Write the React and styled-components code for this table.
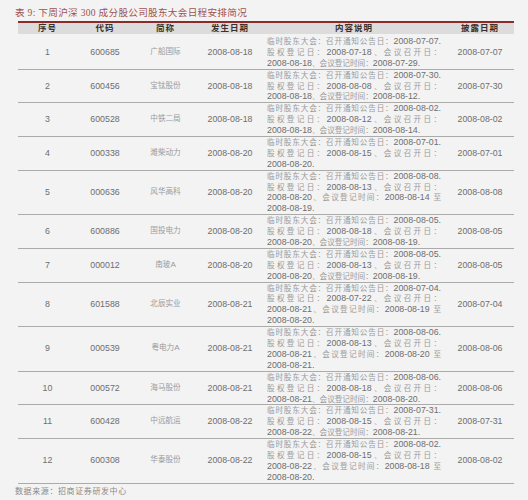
import React from "react";
import styled, { createGlobalStyle } from "styled-components";

const GlobalStyle = createGlobalStyle`
  html, body {
    margin: 0;
    padding: 0;
    background: #f3f3f3;
  }
  body {
    font-family: "Liberation Sans", "Noto Sans CJK SC", sans-serif;
    -webkit-font-smoothing: antialiased;
  }
`;

const rows = [
  {
    no: 1, code: "600685", name: "广船国际", date: "2008-08-18", pub: "2008-07-07",
    lines: ["临时股东大会：召开通知公告日：2008-07-07.", "股权登记日：2008-07-18、会议召开日：", "2008-08-18、会议登记时间：2008-07-29."],
  },
  {
    no: 2, code: "600456", name: "宝钛股份", date: "2008-08-18", pub: "2008-07-30",
    lines: ["临时股东大会：召开通知公告日：2008-07-30.", "股权登记日：2008-08-08、会议召开日：", "2008-08-18、会议登记时间：2008-08-12."],
  },
  {
    no: 3, code: "600528", name: "中铁二局", date: "2008-08-18", pub: "2008-08-02",
    lines: ["临时股东大会：召开通知公告日：2008-08-02.", "股权登记日：2008-08-12、会议召开日：", "2008-08-18、会议登记时间：2008-08-14."],
  },
  {
    no: 4, code: "000338", name: "潍柴动力", date: "2008-08-20", pub: "2008-07-01",
    lines: ["临时股东大会：召开通知公告日：2008-07-01.", "股权登记日：2008-08-15、会议召开日：", "2008-08-20."],
  },
  {
    no: 5, code: "000636", name: "风华高科", date: "2008-08-20", pub: "2008-08-08",
    lines: ["临时股东大会：召开通知公告日：2008-08-08.", "股权登记日：2008-08-13、会议召开日：", "2008-08-20、会议登记时间：2008-08-14 至", "2008-08-19."],
  },
  {
    no: 6, code: "600886", name: "国投电力", date: "2008-08-20", pub: "2008-08-05",
    lines: ["临时股东大会：召开通知公告日：2008-08-05.", "股权登记日：2008-08-18、会议召开日：", "2008-08-20、会议登记时间：2008-08-19."],
  },
  {
    no: 7, code: "000012", name: "南玻A", date: "2008-08-20", pub: "2008-08-05",
    lines: ["临时股东大会：召开通知公告日：2008-08-05.", "股权登记日：2008-08-13、会议召开日：", "2008-08-20、会议登记时间：2008-08-19."],
  },
  {
    no: 8, code: "601588", name: "北辰实业", date: "2008-08-21", pub: "2008-07-04",
    lines: ["临时股东大会：召开通知公告日：2008-07-04.", "股权登记日：2008-07-22、会议召开日：", "2008-08-21、会议登记时间：2008-08-19 至", "2008-08-20."],
  },
  {
    no: 9, code: "000539", name: "粤电力A", date: "2008-08-21", pub: "2008-08-06",
    lines: ["临时股东大会：召开通知公告日：2008-08-06.", "股权登记日：2008-08-13、会议召开日：", "2008-08-21、会议登记时间：2008-08-20 至", "2008-08-21."],
  },
  {
    no: 10, code: "000572", name: "海马股份", date: "2008-08-21", pub: "2008-08-06",
    lines: ["临时股东大会：召开通知公告日：2008-08-06.", "股权登记日：2008-08-18、会议召开日：", "2008-08-21、会议登记时间：2008-08-20."],
  },
  {
    no: 11, code: "600428", name: "中远航运", date: "2008-08-22", pub: "2008-07-31",
    lines: ["临时股东大会：召开通知公告日：2008-07-31.", "股权登记日：2008-08-15、会议召开日：", "2008-08-22、会议登记时间：2008-08-21."],
  },
  {
    no: 12, code: "600308", name: "华泰股份", date: "2008-08-22", pub: "2008-08-02",
    lines: ["临时股东大会：召开通知公告日：2008-08-02.", "股权登记日：2008-08-15、会议召开日：", "2008-08-22、会议登记时间：2008-08-18 至", "2008-08-20."],
  },
];

// wrap runs of chinese chars so they get the lighter, smaller face
const hanRe = /([\u3000-\u9fff\uff00-\uffef]+)/;
function mixText(str) {
  return str.split(hanRe).map((part, i) =>
    i % 2 === 1 ? <Han key={i}>{part}</Han> : part
  );
}

const Page = styled.div`
  padding: 6px 14px 0 15px;
  height: 500px;
  box-sizing: border-box;
  overflow: hidden;
`;

const Title = styled.div`
  font-family: "Liberation Serif", "Noto Sans CJK SC", serif;
  font-size: 9.6px;
  line-height: 14px;
  color: #a0524f;
  letter-spacing: 0.3px;
  white-space: nowrap;
`;

const Table = styled.table`
  margin: 1px 0 0 3px;
  width: 496px;
  border-collapse: collapse;
  table-layout: fixed;
`;

const Th = styled.th`
  background: #dcdcdc;
  border-top: 2px solid #8c2b2b;
  color: #3a302c;
  font-size: 8.5px;
  font-weight: 700;
  height: 11px;
  line-height: 11px;
  padding: 0;
  text-align: center;
  letter-spacing: 1px;
`;

const Tr = styled.tr`
  border-bottom: 1px solid #ababab;
`;

const Td = styled.td`
  padding: ${(p) => (p.$first ? "2px 0 0" : "0")};
  text-align: center;
  vertical-align: middle;
  font-size: 8.8px;
  line-height: 10.9px;
  color: #6e6e6e;
  white-space: nowrap;
`;

const NameTd = styled(Td)`
  font-size: 8px;
  color: #9a9a9a;
`;

const ContentTd = styled(Td)`
  padding: ${(p) => (p.$first ? "2px 5px 0" : "0 5px")};
  text-align: left;
  white-space: normal;
`;

const Line = styled.div`
  font-size: 8.8px;
  line-height: 10.9px;
  height: 10.9px;
  color: #6e6e6e;
  text-align: justify;
  text-align-last: ${(p) => (p.$last ? "left" : "justify")};
  white-space: nowrap;
`;

const Han = styled.span`
  font-size: 7.6px;
  line-height: 0;
  color: #9a9a9a;
`;

const Source = styled.div`
  margin-top: 2px;
  font-size: 8px;
  line-height: 12px;
  color: #8a8a8a;
  letter-spacing: 0.6px;
`;

const Footer = styled.div`
  display: flex;
  justify-content: space-between;
  margin-top: 2px;
`;

const Bar = styled.div`
  width: ${(p) => p.$w}px;
  height: 3px;
  background: #d9d6d2;
`;

export default function App() {
  return (
    <>
      <GlobalStyle />
      <Page>
        <Title>表 9: 下周沪深 300 成分股公司股东大会日程安排简况</Title>
        <Table>
          <colgroup>
            <col style={{ width: 59 }} />
            <col style={{ width: 56 }} />
            <col style={{ width: 65 }} />
            <col style={{ width: 64 }} />
            <col style={{ width: 184 }} />
            <col style={{ width: 68 }} />
          </colgroup>
          <thead>
            <tr>
              <Th>序号</Th>
              <Th>代码</Th>
              <Th>简称</Th>
              <Th>发生日期</Th>
              <Th>内容说明</Th>
              <Th>披露日期</Th>
            </tr>
          </thead>
          <tbody>
            {rows.map((r, idx) => {
              const first = idx === 0;
              return (
                <Tr key={r.no}>
                  <Td $first={first}>{r.no}</Td>
                  <Td $first={first}>{r.code}</Td>
                  <NameTd $first={first}>{mixText(r.name)}</NameTd>
                  <Td $first={first}>{r.date}</Td>
                  <ContentTd $first={first}>
                    {r.lines.map((ln, i) => (
                      <Line key={i} $last={i === r.lines.length - 1}>
                        {mixText(ln)}
                      </Line>
                    ))}
                  </ContentTd>
                  <Td $first={first}>{r.pub}</Td>
                </Tr>
              );
            })}
          </tbody>
        </Table>
        <Source>数据来源：招商证券研发中心</Source>
        <Footer>
          <Bar $w={120} />
          <Bar $w={50} />
        </Footer>
      </Page>
    </>
  );
}
